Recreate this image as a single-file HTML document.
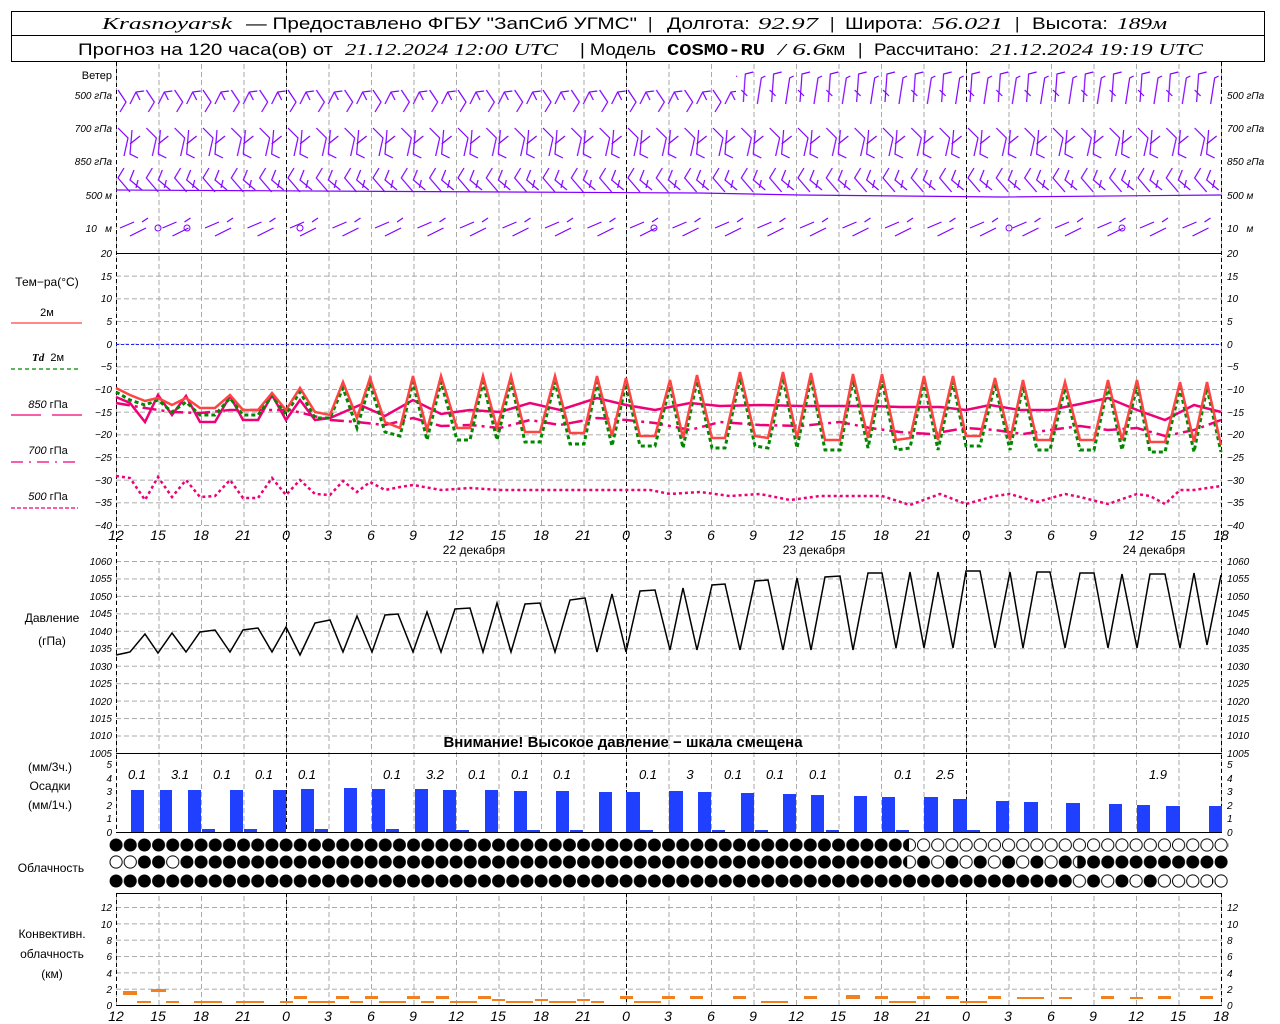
<!DOCTYPE html>
<html><head><meta charset="utf-8"><style>
html,body{margin:0;padding:0;background:#fff;}
svg{display:block}
text{font-family:"Liberation Sans",sans-serif;fill:#000}
.t{font-size:11px}
.ax{font-size:10px;font-style:italic}
.ar{font-size:10px;font-style:italic;text-anchor:end}
.xl{font-size:14px;font-style:italic;text-anchor:middle}
.h{font-size:17px}
.hi{font-size:17px;font-style:italic;font-family:"Liberation Serif",serif}
.pv{font-size:13px;font-style:italic;text-anchor:middle}
.lg{font-size:12px;text-anchor:middle}
</style></head><body>
<svg width="1280" height="1024" viewBox="0 0 1280 1024" xmlns="http://www.w3.org/2000/svg">
<defs>
<pattern id="vg" x="116" y="0" width="42.5" height="8" patternUnits="userSpaceOnUse"><line x1="0.5" y1="0" x2="0.5" y2="5" stroke="#aaa" stroke-width="1"/></pattern>
<pattern id="hgT" x="116" y="253" width="8" height="22.667" patternUnits="userSpaceOnUse"><line x1="0" y1="0.5" x2="5" y2="0.5" stroke="#aaa"/></pattern>
<pattern id="hgP" x="116" y="561" width="8" height="17.45" patternUnits="userSpaceOnUse"><line x1="0" y1="0.5" x2="5" y2="0.5" stroke="#aaa"/></pattern>
<pattern id="hgC" x="116" y="890.7" width="8" height="16.33" patternUnits="userSpaceOnUse"><line x1="0" y1="0.5" x2="5" y2="0.5" stroke="#aaa"/></pattern>
<pattern id="cb" x="109" y="0" width="14.167" height="14" patternUnits="userSpaceOnUse"><circle cx="7.08" cy="7" r="6.5" fill="#000"/></pattern>
<pattern id="cw" x="109" y="0" width="14.167" height="14" patternUnits="userSpaceOnUse"><circle cx="7.08" cy="7" r="6.1" fill="#fff" stroke="#000" stroke-width="1"/></pattern>
<pattern id="ca" x="109" y="0" width="28.333" height="14" patternUnits="userSpaceOnUse"><circle cx="7.08" cy="7" r="6.1" fill="#fff" stroke="#000"/><circle cx="21.25" cy="7" r="6.5" fill="#000"/></pattern>
<pattern id="w1" x="116" y="88" width="28.333" height="40" patternUnits="userSpaceOnUse"><path d="M2,2 L10,14 L4,24 M14,16 L20,4 L28,3 M20,4 L24,12" fill="none" stroke="#8000ff" stroke-width="1.2"/></pattern>
<pattern id="w1b" x="116" y="68" width="28.333" height="60" patternUnits="userSpaceOnUse"><path d="M4,34 L6,6 L14,4 M18,36 L22,10 L26,8 M8,28 L2,22" fill="none" stroke="#8000ff" stroke-width="1.2"/></pattern>
<pattern id="w2" x="116" y="126" width="28.333" height="40" patternUnits="userSpaceOnUse"><path d="M2,2 L12,12 L8,30 M16,4 L14,28 L22,32 M14,18 L24,10" fill="none" stroke="#8000ff" stroke-width="1.2"/></pattern>
<pattern id="w3" x="116" y="166" width="28.333" height="40" patternUnits="userSpaceOnUse"><path d="M8,2 L2,12 L14,26 M18,4 L14,14 L26,24 M22,14 L20,22" fill="none" stroke="#8000ff" stroke-width="1.2"/></pattern>
<pattern id="w4" x="116" y="212" width="42.5" height="40" patternUnits="userSpaceOnUse"><path d="M4,16 L18,10 M14,24 L30,16 M26,10 L32,6" fill="none" stroke="#8000ff" stroke-width="1.2"/></pattern>
</defs>

<!-- header -->
<rect x="11.5" y="11.5" width="1253" height="50" fill="none" stroke="#000"/>
<line x1="11" y1="35.5" x2="1264" y2="35.5" stroke="#000"/>
<text x="102" y="29" class="hi" textLength="130" lengthAdjust="spacingAndGlyphs">Krasnoyarsk</text>
<text x="246" y="29" class="h" textLength="391" lengthAdjust="spacingAndGlyphs">— Предоставлено ФГБУ "ЗапСиб УГМС"</text>
<text x="648" y="29" class="h">|</text>
<text x="667" y="29" class="h" textLength="83" lengthAdjust="spacingAndGlyphs">Долгота:</text>
<text x="758" y="29" class="hi" textLength="60" lengthAdjust="spacingAndGlyphs">92.97</text>
<text x="830" y="29" class="h">|</text>
<text x="845" y="29" class="h" textLength="78" lengthAdjust="spacingAndGlyphs">Широта:</text>
<text x="932" y="29" class="hi" textLength="71" lengthAdjust="spacingAndGlyphs">56.021</text>
<text x="1015" y="29" class="h">|</text>
<text x="1032" y="29" class="h" textLength="76" lengthAdjust="spacingAndGlyphs">Высота:</text>
<text x="1117" y="29" class="hi" textLength="50" lengthAdjust="spacingAndGlyphs">189м</text>
<text x="78" y="55" class="h" textLength="255" lengthAdjust="spacingAndGlyphs">Прогноз на 120 часа(ов) от</text>
<text x="345" y="55" class="hi" textLength="213" lengthAdjust="spacingAndGlyphs">21.12.2024 12:00 UTC</text>
<text x="580" y="55" class="h" textLength="76" lengthAdjust="spacingAndGlyphs">| Модель</text>
<text x="667" y="55" class="h" style="font-family:'Liberation Mono',monospace;font-weight:bold" textLength="98" lengthAdjust="spacingAndGlyphs">COSMO-RU</text>
<text x="778" y="55" class="hi" textLength="48" lengthAdjust="spacingAndGlyphs">/ 6.6</text>
<text x="826" y="55" class="h">км</text>
<text x="858" y="55" class="h">|</text>
<text x="874" y="55" class="h" textLength="105" lengthAdjust="spacingAndGlyphs">Рассчитано:</text>
<text x="990" y="55" class="hi" textLength="213" lengthAdjust="spacingAndGlyphs">21.12.2024 19:19 UTC</text>

<!-- grids -->
<rect x="116" y="62" width="1106" height="191" fill="url(#vg)"/>
<rect x="116" y="253" width="1106" height="273" fill="url(#vg)"/>
<rect x="116" y="253" width="1106" height="273" fill="url(#hgT)"/>
<rect x="116" y="561" width="1106" height="192" fill="url(#vg)"/>
<rect x="116" y="561" width="1106" height="192" fill="url(#hgP)"/>
<rect x="116" y="753" width="1106" height="80" fill="url(#vg)"/>
<rect x="116" y="893" width="1106" height="112" fill="url(#vg)"/>
<rect x="116" y="893" width="1106" height="112" fill="url(#hgC)"/>
<g stroke="#000" stroke-dasharray="4,3" stroke-width="1">
<line x1="116.5" y1="62" x2="116.5" y2="833"/><line x1="116.5" y1="893" x2="116.5" y2="1005"/>
<line x1="286.5" y1="62" x2="286.5" y2="833"/><line x1="286.5" y1="893" x2="286.5" y2="1005"/>
<line x1="626.5" y1="62" x2="626.5" y2="833"/><line x1="626.5" y1="893" x2="626.5" y2="1005"/>
<line x1="966.5" y1="62" x2="966.5" y2="833"/><line x1="966.5" y1="893" x2="966.5" y2="1005"/>
<line x1="1221.5" y1="62" x2="1221.5" y2="833"/><line x1="1221.5" y1="893" x2="1221.5" y2="1005"/>
</g>
<g stroke="#000"><line x1="116" y1="253.5" x2="1222" y2="253.5"/><line x1="116" y1="753.5" x2="1222" y2="753.5"/><line x1="116" y1="893.5" x2="1222" y2="893.5"/><line x1="116" y1="1005.5" x2="1222" y2="1005.5"/><line x1="116" y1="832.5" x2="1222" y2="832.5"/></g>
<line x1="116" y1="344.5" x2="1221" y2="344.5" stroke="#22f" stroke-dasharray="3,2"/>

<!-- wind -->
<rect x="116" y="88" width="620" height="38" fill="url(#w1)"/>
<rect x="736" y="68" width="485" height="58" fill="url(#w1b)"/>
<rect x="116" y="126" width="1105" height="38" fill="url(#w2)"/>
<rect x="116" y="166" width="1105" height="40" fill="url(#w3)"/>
<rect x="116" y="212" width="1105" height="32" fill="url(#w4)"/>
<g fill="none" stroke="#8000ff"><circle cx="158" cy="228" r="3"/><circle cx="187" cy="228" r="3"/><circle cx="300" cy="228" r="3"/><circle cx="654" cy="228" r="3"/><circle cx="1009" cy="228" r="3"/><circle cx="1122" cy="228" r="3"/></g>
<polyline points="116,190 700,193 800,195 1000,197 1221,195" fill="none" stroke="#8000ff" stroke-width="1.2"/>
<text x="112" y="79" class="t" text-anchor="end">Ветер</text>
<text x="112" y="99" class="ar">500 гПа</text><text x="112" y="132" class="ar">700 гПа</text><text x="112" y="165" class="ar">850 гПа</text><text x="112" y="199" class="ar">500 м</text><text x="112" y="232" class="ar">10&#160;&#160;&#160;м</text>
<text x="1227" y="99" class="ax">500 гПа</text><text x="1227" y="132" class="ax">700 гПа</text><text x="1227" y="165" class="ax">850 гПа</text><text x="1227" y="199" class="ax">500 м</text><text x="1227" y="232" class="ax">10&#160;&#160;&#160;м</text>

<!-- temperature axis -->
<g>
<text x="112" y="257" class="ar">20</text><text x="112" y="280" class="ar">15</text><text x="112" y="302" class="ar">10</text><text x="112" y="325" class="ar">5</text><text x="112" y="348" class="ar">0</text><text x="112" y="370" class="ar">−5</text><text x="112" y="393" class="ar">−10</text><text x="112" y="416" class="ar">−15</text><text x="112" y="438" class="ar">−20</text><text x="112" y="461" class="ar">−25</text><text x="112" y="484" class="ar">−30</text><text x="112" y="506" class="ar">−35</text><text x="112" y="529" class="ar">−40</text>
<text x="1227" y="257" class="ax">20</text><text x="1227" y="280" class="ax">15</text><text x="1227" y="302" class="ax">10</text><text x="1227" y="325" class="ax">5</text><text x="1227" y="348" class="ax">0</text><text x="1227" y="370" class="ax">−5</text><text x="1227" y="393" class="ax">−10</text><text x="1227" y="416" class="ax">−15</text><text x="1227" y="438" class="ax">−20</text><text x="1227" y="461" class="ax">−25</text><text x="1227" y="484" class="ax">−30</text><text x="1227" y="506" class="ax">−35</text><text x="1227" y="529" class="ax">−40</text>
</g>
<text x="47" y="286" class="lg">Тем−ра(°C)</text>
<text x="47" y="316" class="t" text-anchor="middle">2м</text>
<line x1="11" y1="323" x2="82" y2="323" stroke="#f44" stroke-width="1.2"/>
<text x="48" y="361" class="t" text-anchor="middle"><tspan font-style="italic" font-weight="bold" font-family="Liberation Serif">Td</tspan>&#160;&#160;2м</text>
<line x1="11" y1="369" x2="78" y2="369" stroke="#080" stroke-width="1.2" stroke-dasharray="4,3"/>
<text x="48" y="408" class="t" text-anchor="middle"><tspan font-style="italic">850</tspan> гПа</text>
<line x1="11" y1="415" x2="41" y2="415" stroke="#e07" stroke-width="1.2"/><line x1="52" y1="415" x2="82" y2="415" stroke="#e07" stroke-width="1.2"/>
<text x="48" y="454" class="t" text-anchor="middle"><tspan font-style="italic">700</tspan> гПа</text>
<line x1="11" y1="462" x2="78" y2="462" stroke="#e07" stroke-width="1.2" stroke-dasharray="12,6,2,6"/>
<text x="48" y="500" class="t" text-anchor="middle"><tspan font-style="italic">500</tspan> гПа</text>
<line x1="11" y1="508" x2="78" y2="508" stroke="#e07" stroke-width="1.2" stroke-dasharray="4,2"/>

<!-- temperature curves -->
<polyline fill="none" stroke="#e07" stroke-width="2.5" stroke-dasharray="3,3" points="116,476 130,478 145,500 158,477 172,497 186,480 200,497 215,496 230,480 243,498 258,498 272,478 286,495 300,480 315,494 330,495 343,481 357,492 370,482 385,490 400,487 413,485 441,490 470,488 500,490 530,490 560,490 597,490 626,490 650,490 670,494 700,492 730,496 760,494 790,500 820,496 853,496 882,496 910,505 940,494 966,504 995,496 1010,494 1037,502 1065,494 1080,497 1108,504 1137,494 1150,496 1165,504 1180,490 1194,490 1221,486"/>
<polyline fill="none" stroke="#e07" stroke-width="2.5" stroke-dasharray="14,5,3,5" points="116,403 145,408 172,412 200,413 230,410 260,410 290,410 330,420 357,422 385,425 413,418 441,426 470,425 500,428 530,420 560,425 597,418 626,420 655,423 690,430 720,422 760,425 800,426 840,422 870,428 900,432 930,434 966,428 995,430 1023,434 1050,430 1080,426 1108,430 1137,428 1165,436 1194,430 1221,420"/>
<polyline fill="none" stroke="#e07" stroke-width="2.5" points="116,397 130,403 145,422 158,395 172,415 186,396 200,422 215,422 230,396 243,420 258,420 272,395 286,420 300,400 315,420 330,418 360,405 385,416 413,400 441,414 470,410 500,412 530,403 560,410 597,398 626,405 655,410 690,403 720,406 760,405 800,406 830,406 870,406 900,407 940,407 966,410 990,405 1020,410 1050,410 1080,404 1108,398 1137,410 1165,420 1194,405 1221,412"/>
<polyline fill="none" stroke="#080" stroke-width="3" stroke-dasharray="4,3" points="116,392 130,400 145,405 158,400 172,412 186,402 200,415 215,415 230,398 243,415 258,415 272,396 286,414 300,392 315,418 330,418 343,388 357,428 370,384 385,432 400,436 413,382 427,440 441,382 457,440 470,440 483,382 497,440 511,382 525,442 540,442 555,382 570,444 584,444 597,382 612,446 626,384 640,446 655,446 670,386 683,448 697,381 712,448 725,448 740,378 755,446 768,448 783,378 797,448 811,379 825,450 840,450 853,380 868,448 882,380 896,450 910,448 924,382 938,450 953,382 966,446 980,446 995,384 1010,450 1023,386 1037,450 1050,450 1065,388 1080,450 1094,450 1108,386 1122,450 1137,386 1150,452 1165,452 1180,388 1194,452 1207,388 1221,452"/>
<polyline fill="none" stroke="#f44" stroke-width="2.5" points="116,388 130,395 145,401 158,398 172,405 186,398 200,408 215,408 230,395 243,410 258,410 272,393 286,410 300,388 315,412 330,415 343,382 357,418 370,378 385,422 400,428 413,376 427,430 441,376 457,428 470,428 483,376 497,428 511,376 525,432 540,432 555,376 570,433 584,433 597,376 612,436 626,378 640,436 655,436 670,380 683,438 697,375 712,438 725,438 740,372 755,436 768,438 783,372 797,438 811,373 825,440 840,440 853,374 868,438 882,374 896,440 910,438 924,376 938,440 953,376 966,436 980,436 995,378 1010,440 1023,380 1037,440 1050,440 1065,382 1080,440 1094,440 1108,380 1122,440 1137,380 1150,442 1165,442 1180,382 1194,442 1207,382 1221,445"/>

<!-- x labels -->
<g>
<text x="116" y="540" class="xl">12</text><text x="158" y="540" class="xl">15</text><text x="201" y="540" class="xl">18</text><text x="243" y="540" class="xl">21</text><text x="286" y="540" class="xl">0</text><text x="328" y="540" class="xl">3</text><text x="371" y="540" class="xl">6</text><text x="413" y="540" class="xl">9</text><text x="456" y="540" class="xl">12</text><text x="498" y="540" class="xl">15</text><text x="541" y="540" class="xl">18</text><text x="583" y="540" class="xl">21</text><text x="626" y="540" class="xl">0</text><text x="668" y="540" class="xl">3</text><text x="711" y="540" class="xl">6</text><text x="753" y="540" class="xl">9</text><text x="796" y="540" class="xl">12</text><text x="838" y="540" class="xl">15</text><text x="881" y="540" class="xl">18</text><text x="923" y="540" class="xl">21</text><text x="966" y="540" class="xl">0</text><text x="1008" y="540" class="xl">3</text><text x="1051" y="540" class="xl">6</text><text x="1093" y="540" class="xl">9</text><text x="1136" y="540" class="xl">12</text><text x="1178" y="540" class="xl">15</text><text x="1221" y="540" class="xl">18</text>
</g>
<text x="474" y="554" class="lg">22 декабря</text><text x="814" y="554" class="lg">23 декабря</text><text x="1154" y="554" class="lg">24 декабря</text>

<!-- pressure -->
<g>
<text x="112" y="565" class="ar">1060</text><text x="112" y="582" class="ar">1055</text><text x="112" y="600" class="ar">1050</text><text x="112" y="617" class="ar">1045</text><text x="112" y="635" class="ar">1040</text><text x="112" y="652" class="ar">1035</text><text x="112" y="670" class="ar">1030</text><text x="112" y="687" class="ar">1025</text><text x="112" y="705" class="ar">1020</text><text x="112" y="722" class="ar">1015</text><text x="112" y="739" class="ar">1010</text><text x="112" y="757" class="ar">1005</text>
<text x="1227" y="565" class="ax">1060</text><text x="1227" y="582" class="ax">1055</text><text x="1227" y="600" class="ax">1050</text><text x="1227" y="617" class="ax">1045</text><text x="1227" y="635" class="ax">1040</text><text x="1227" y="652" class="ax">1035</text><text x="1227" y="670" class="ax">1030</text><text x="1227" y="687" class="ax">1025</text><text x="1227" y="705" class="ax">1020</text><text x="1227" y="722" class="ax">1015</text><text x="1227" y="739" class="ax">1010</text><text x="1227" y="757" class="ax">1005</text>
</g>
<text x="52" y="622" class="lg">Давление</text><text x="52" y="645" class="lg">(гПа)</text>
<polyline fill="none" stroke="#000" stroke-width="1.5" points="116,655 130,652 145,634 158,653 172,633 186,652 200,632 215,630 230,652 243,630 258,628 272,652 286,627 300,655 315,623 330,620 343,652 357,616 372,652 385,615 398,614 413,652 427,612 441,652 455,609 470,608 483,652 497,603 511,652 525,604 540,603 555,652 570,600 585,598 597,652 612,594 626,652 640,591 655,590 670,650 683,588 697,650 712,585 725,584 740,650 755,581 768,580 783,650 797,578 811,650 825,577 840,576 853,650 868,573 882,573 896,648 910,572 924,648 938,572 953,648 966,571 980,571 995,648 1010,572 1023,648 1037,572 1050,572 1065,648 1080,573 1094,573 1108,648 1122,574 1137,648 1150,574 1165,574 1180,648 1194,573 1207,645 1221,575"/>
<text x="623" y="747" text-anchor="middle" style="font-size:15px;font-weight:bold">Внимание! Высокое давление − шкала смещена</text>

<!-- precip -->
<g>
<text x="112" y="768" class="ar">5</text><text x="112" y="782" class="ar">4</text><text x="112" y="795" class="ar">3</text><text x="112" y="809" class="ar">2</text><text x="112" y="822" class="ar">1</text><text x="112" y="836" class="ar">0</text>
<text x="1227" y="768" class="ax">5</text><text x="1227" y="782" class="ax">4</text><text x="1227" y="795" class="ax">3</text><text x="1227" y="809" class="ax">2</text><text x="1227" y="822" class="ax">1</text><text x="1227" y="836" class="ax">0</text>
</g>
<text x="50" y="771" class="lg">(мм/3ч.)</text><text x="50" y="790" class="lg">Осадки</text><text x="50" y="809" class="lg">(мм/1ч.)</text>
<g fill="#2040ff">
<rect x="131" y="790" width="13" height="42"/><rect x="160" y="790" width="12" height="42"/><rect x="188" y="790" width="13" height="42"/><rect x="230" y="790" width="13" height="42"/><rect x="273" y="790" width="13" height="42"/><rect x="301" y="789" width="13" height="43"/><rect x="344" y="788" width="13" height="44"/><rect x="372" y="789" width="13" height="43"/><rect x="415" y="789" width="13" height="43"/><rect x="443" y="790" width="13" height="42"/><rect x="485" y="790" width="13" height="42"/><rect x="514" y="791" width="13" height="41"/><rect x="556" y="791" width="13" height="41"/><rect x="599" y="792" width="13" height="40"/><rect x="626" y="792" width="14" height="40"/><rect x="669" y="791" width="14" height="41"/><rect x="698" y="792" width="13" height="40"/><rect x="741" y="793" width="13" height="39"/><rect x="783" y="794" width="13" height="38"/><rect x="811" y="795" width="13" height="37"/><rect x="854" y="796" width="13" height="36"/><rect x="882" y="797" width="13" height="35"/><rect x="924" y="797" width="14" height="35"/><rect x="953" y="799" width="14" height="33"/><rect x="996" y="801" width="13" height="31"/><rect x="1024" y="802" width="14" height="30"/><rect x="1066" y="803" width="14" height="29"/><rect x="1109" y="804" width="13" height="28"/><rect x="1137" y="805" width="13" height="27"/><rect x="1166" y="806" width="14" height="26"/><rect x="1209" y="806" width="13" height="26"/>
<rect x="202" y="829" width="13" height="3"/><rect x="244" y="829" width="13" height="3"/><rect x="315" y="829" width="13" height="3"/><rect x="386" y="829" width="13" height="3"/><rect x="456" y="830" width="13" height="2"/><rect x="527" y="830" width="13" height="2"/><rect x="570" y="830" width="13" height="2"/><rect x="640" y="830" width="13" height="2"/><rect x="712" y="830" width="13" height="2"/><rect x="755" y="830" width="13" height="2"/><rect x="826" y="830" width="13" height="2"/><rect x="896" y="830" width="13" height="2"/><rect x="967" y="830" width="13" height="2"/>
</g>
<g>
<text x="137" y="779" class="pv">0.1</text><text x="180" y="779" class="pv">3.1</text><text x="222" y="779" class="pv">0.1</text><text x="264" y="779" class="pv">0.1</text><text x="307" y="779" class="pv">0.1</text><text x="392" y="779" class="pv">0.1</text><text x="435" y="779" class="pv">3.2</text><text x="477" y="779" class="pv">0.1</text><text x="520" y="779" class="pv">0.1</text><text x="562" y="779" class="pv">0.1</text><text x="648" y="779" class="pv">0.1</text><text x="690" y="779" class="pv">3</text><text x="733" y="779" class="pv">0.1</text><text x="775" y="779" class="pv">0.1</text><text x="818" y="779" class="pv">0.1</text><text x="903" y="779" class="pv">0.1</text><text x="945" y="779" class="pv">2.5</text><text x="1158" y="779" class="pv">1.9</text>
</g>

<!-- clouds -->
<text x="51" y="872" class="lg">Облачность</text>
<g transform="translate(0,838)">
<rect x="109" y="0" width="800" height="14" fill="url(#cb)"/>
<rect x="909" y="0" width="320" height="14" fill="url(#cw)"/>
</g>
<g transform="translate(0,855)">
<rect x="109" y="0" width="28.3" height="14" fill="url(#cw)"/>
<rect x="137.3" y="0" width="770" height="14" fill="url(#cb)"/>
<rect x="165.6" y="0" width="14.2" height="14" fill="#fff"/>
<rect x="165.6" y="0" width="14.2" height="14" fill="url(#cw)"/>
<rect x="907.3" y="0" width="170" height="14" fill="url(#ca)"/>
<rect x="1077.3" y="0" width="151" height="14" fill="url(#cb)"/>
</g>
<g transform="translate(0,874)">
<rect x="109" y="0" width="963" height="14" fill="url(#cb)"/>
<rect x="1072" y="0" width="156" height="14" fill="url(#ca)"/>
<rect x="1170" y="0" width="42" height="14" fill="#fff"/>
<rect x="1170" y="0" width="42" height="14" fill="url(#cw)"/>
</g>

<!-- convective -->
<text x="52" y="938" class="lg">Конвективн.</text><text x="52" y="958" class="lg">облачность</text><text x="52" y="978" class="lg">(км)</text>
<g>
<text x="112" y="911" class="ar">12</text><text x="112" y="928" class="ar">10</text><text x="112" y="944" class="ar">8</text><text x="112" y="960" class="ar">6</text><text x="112" y="977" class="ar">4</text><text x="112" y="993" class="ar">2</text><text x="112" y="1009" class="ar">0</text>
<text x="1227" y="911" class="ax">12</text><text x="1227" y="928" class="ax">10</text><text x="1227" y="944" class="ax">8</text><text x="1227" y="960" class="ax">6</text><text x="1227" y="977" class="ax">4</text><text x="1227" y="993" class="ax">2</text><text x="1227" y="1009" class="ax">0</text>
</g>
<g fill="#f08020">
<rect x="123" y="991" width="14" height="4"/><rect x="151" y="989" width="15" height="3"/>
<rect x="137" y="1001" width="14" height="2"/><rect x="166" y="1001" width="13" height="2"/><rect x="194" y="1001" width="28" height="2"/><rect x="236" y="1001" width="28" height="2"/><rect x="280" y="1001" width="13" height="2"/>
<rect x="294" y="996" width="13" height="3"/><rect x="308" y="1001" width="27" height="2"/><rect x="336" y="996" width="13" height="3"/><rect x="350" y="1001" width="13" height="2"/><rect x="365" y="996" width="13" height="3"/><rect x="379" y="1001" width="27" height="2"/><rect x="407" y="996" width="13" height="3"/><rect x="421" y="1001" width="13" height="2"/><rect x="436" y="996" width="13" height="3"/><rect x="450" y="1001" width="27" height="2"/><rect x="478" y="996" width="13" height="3"/><rect x="492" y="999" width="13" height="2"/><rect x="506" y="1001" width="27" height="2"/><rect x="535" y="999" width="13" height="2"/><rect x="549" y="1001" width="27" height="2"/><rect x="577" y="999" width="13" height="2"/><rect x="591" y="1001" width="13" height="2"/><rect x="620" y="996" width="13" height="3"/><rect x="634" y="1001" width="27" height="2"/><rect x="662" y="996" width="13" height="3"/><rect x="690" y="996" width="13" height="3"/><rect x="733" y="996" width="13" height="3"/><rect x="761" y="1001" width="27" height="2"/><rect x="804" y="996" width="13" height="3"/><rect x="846" y="995" width="14" height="4"/><rect x="875" y="996" width="13" height="3"/><rect x="889" y="1001" width="27" height="2"/><rect x="917" y="996" width="13" height="3"/><rect x="946" y="996" width="13" height="3"/><rect x="960" y="1001" width="27" height="2"/><rect x="988" y="996" width="13" height="3"/><rect x="1017" y="997" width="27" height="2"/><rect x="1059" y="997" width="13" height="2"/><rect x="1101" y="996" width="13" height="3"/><rect x="1130" y="997" width="13" height="2"/><rect x="1158" y="996" width="13" height="3"/><rect x="1200" y="996" width="13" height="3"/>
</g>
<g>
<text x="116" y="1021" class="xl">12</text><text x="158" y="1021" class="xl">15</text><text x="201" y="1021" class="xl">18</text><text x="243" y="1021" class="xl">21</text><text x="286" y="1021" class="xl">0</text><text x="328" y="1021" class="xl">3</text><text x="371" y="1021" class="xl">6</text><text x="413" y="1021" class="xl">9</text><text x="456" y="1021" class="xl">12</text><text x="498" y="1021" class="xl">15</text><text x="541" y="1021" class="xl">18</text><text x="583" y="1021" class="xl">21</text><text x="626" y="1021" class="xl">0</text><text x="668" y="1021" class="xl">3</text><text x="711" y="1021" class="xl">6</text><text x="753" y="1021" class="xl">9</text><text x="796" y="1021" class="xl">12</text><text x="838" y="1021" class="xl">15</text><text x="881" y="1021" class="xl">18</text><text x="923" y="1021" class="xl">21</text><text x="966" y="1021" class="xl">0</text><text x="1008" y="1021" class="xl">3</text><text x="1051" y="1021" class="xl">6</text><text x="1093" y="1021" class="xl">9</text><text x="1136" y="1021" class="xl">12</text><text x="1178" y="1021" class="xl">15</text><text x="1221" y="1021" class="xl">18</text>
</g>
</svg>
</body></html>
